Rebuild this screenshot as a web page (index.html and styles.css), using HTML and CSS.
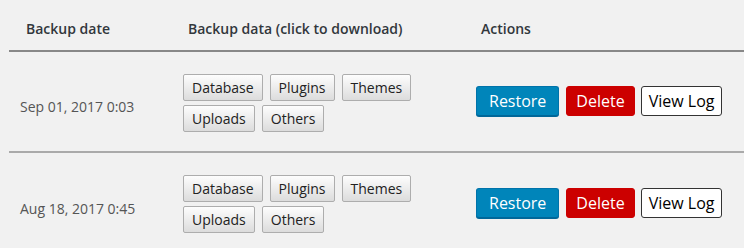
FILE: index.html
```html
<!DOCTYPE html>
<html>
<head>
  <meta charset="utf-8">
  <title>Backups</title>
  <link rel="stylesheet" href="styles.css">
</head>
<body>
  <table class="backups">
    <thead>
      <tr>
        <th class="col-date">Backup date</th>
        <th class="col-data">Backup data (click to download)</th>
        <th class="col-actions">Actions</th>
      </tr>
    </thead>
    <tbody>
      <tr>
        <td class="date">Sep 01, 2017 0:03</td>
        <td>
          <div class="downloads">
            <button class="dl">Database</button>
            <button class="dl">Plugins</button>
            <button class="dl">Themes</button>
            <button class="dl">Uploads</button>
            <button class="dl">Others</button>
          </div>
        </td>
        <td>
          <div class="actions">
            <button class="btn restore">Restore</button>
            <button class="btn delete">Delete</button>
            <button class="btn log">View Log</button>
          </div>
        </td>
      </tr>
      <tr>
        <td class="date">Aug 18, 2017 0:45</td>
        <td>
          <div class="downloads">
            <button class="dl">Database</button>
            <button class="dl">Plugins</button>
            <button class="dl">Themes</button>
            <button class="dl">Uploads</button>
            <button class="dl">Others</button>
          </div>
        </td>
        <td>
          <div class="actions">
            <button class="btn restore">Restore</button>
            <button class="btn delete">Delete</button>
            <button class="btn log">View Log</button>
          </div>
        </td>
      </tr>
    </tbody>
  </table>
</body>
</html>
```

FILE: styles.css
```css
body {
  margin: 0;
  background-color: #f1f1f1;
  font-family: 'Open Sans', 'Noto Sans', sans-serif;
  color: #32373c;
}

.backups {
  margin-left: 9px;
  width: calc(100% - 9px);
  border-collapse: collapse;
  table-layout: fixed;
}

.backups th {
  height: 51px;
  padding: 6px 0 0 15px;
  box-sizing: border-box;
  text-align: left;
  font-size: 14px;
  font-weight: 600;
  color: #32373c;
  border-bottom: 2px solid #888;
}

.backups th.col-date {
  width: 164px;
  padding-left: 17px;
}

.backups th.col-data {
  width: 293px;
}

.backups td {
  height: 101px;
  padding: 0 10px;
  box-sizing: border-box;
  vertical-align: middle;
  border-bottom: 2px solid #aaa;
}

.backups tbody tr:last-child td {
  border-bottom: none;
}

.backups td.date {
  padding: 10px 0 0 11px;
  font-size: 14px;
  color: #555;
}

.downloads {
  display: flex;
  flex-wrap: wrap;
  gap: 4px 7px;
  padding-top: 2px;
}

.dl {
  box-sizing: border-box;
  height: 27px;
  font-family: inherit;
  font-size: 14px;
  line-height: 19px;
  padding: 0 8px;
  color: #222;
  background: linear-gradient(#fdfdfd, #dcdcdc);
  border: 1px solid #adadad;
  border-radius: 2px;
  cursor: pointer;
}

.actions {
  display: flex;
  gap: 6px;
  padding-bottom: 1px;
}

.btn {
  box-sizing: border-box;
  height: 30px;
  font-family: inherit;
  font-size: 16px;
  line-height: 22px;
  padding: 0 8px;
  border-radius: 3px;
  cursor: pointer;
}

.restore {
  padding: 0 12px;
  margin-right: 1px;
  color: white;
  background-color: #0085ba;
  border: 1px solid #0073aa;
  border-bottom-color: #006799;
  box-shadow: 0 1px 0 #006799;
}

.delete {
  padding: 0 9px;
  color: white;
  background-color: #c00;
  border: 1px solid #c00;
}

.log {
  padding: 0 7px;
  color: #000;
  background-color: white;
  border: 1px solid #333;
}
```
